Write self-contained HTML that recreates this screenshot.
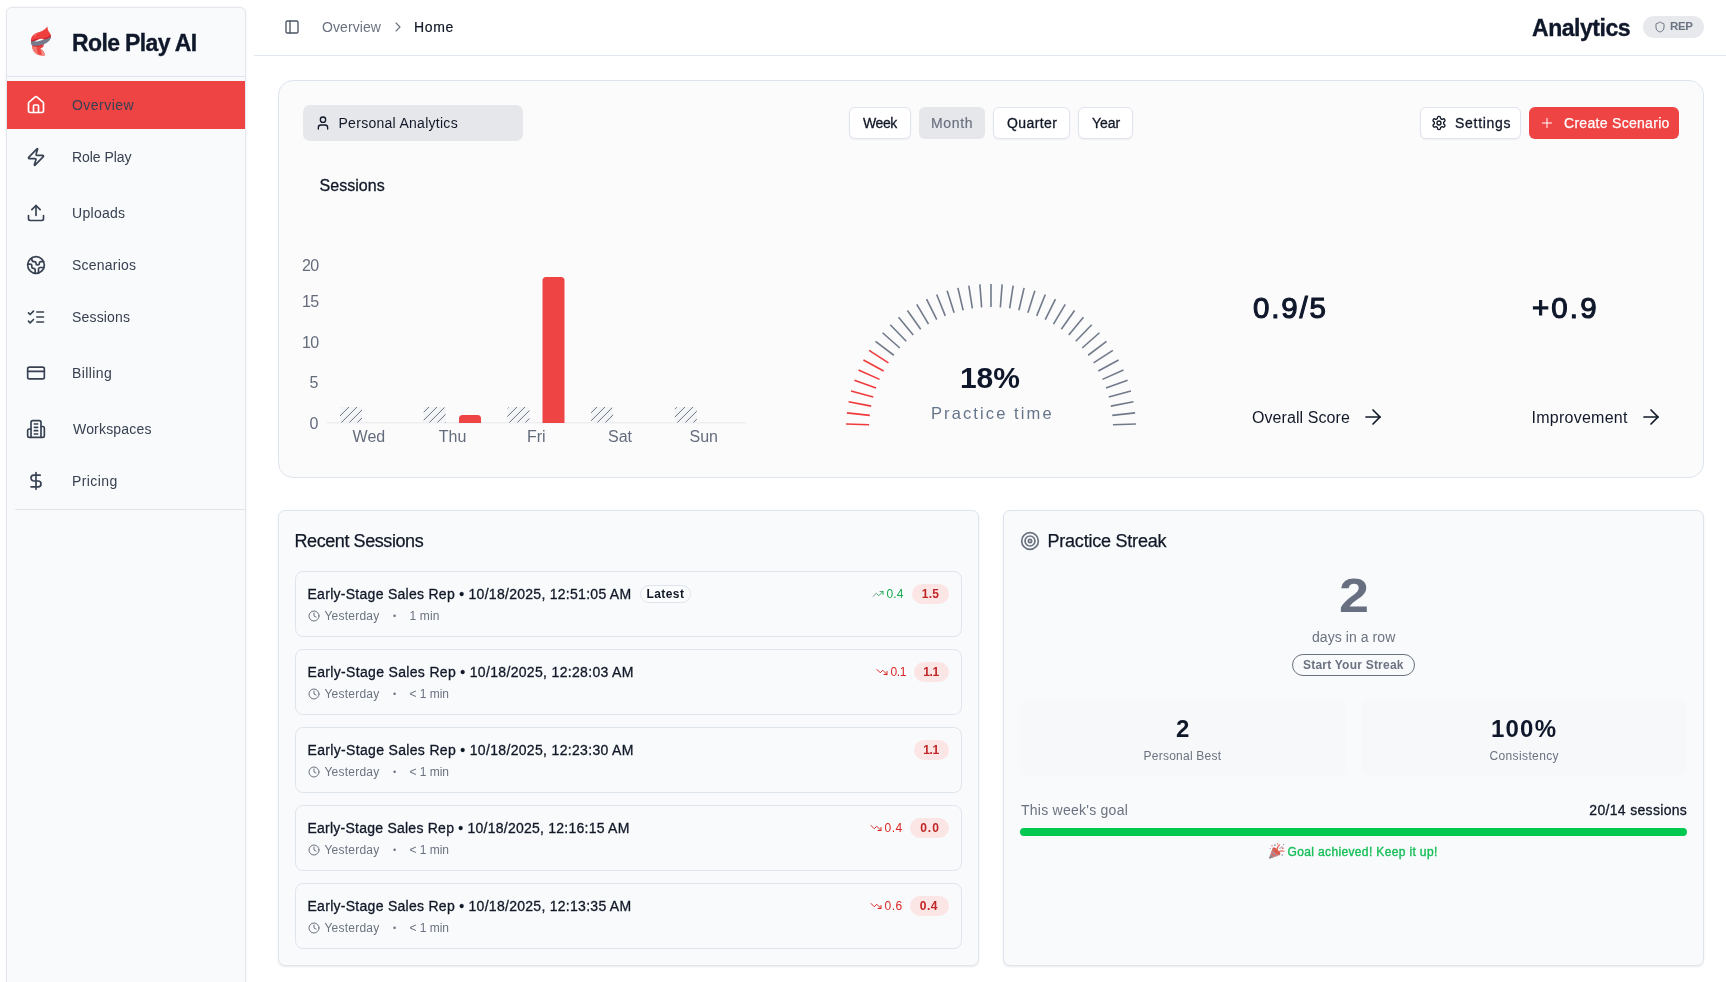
<!DOCTYPE html>
<html lang="en">
<head>
<meta charset="utf-8">
<title>Role Play AI - Analytics</title>
<style>
*{box-sizing:border-box;margin:0;padding:0}
html,body{width:1726px;height:982px;overflow:hidden;background:#fff}
body{font-family:"Liberation Sans",sans-serif;color:#0f172a;position:relative;-webkit-font-smoothing:antialiased;will-change:transform}
.abs{position:absolute}
.t{position:absolute;white-space:nowrap;line-height:1}
svg{display:block;overflow:visible}
.ico{position:absolute;fill:none;stroke:currentColor;stroke-width:2;stroke-linecap:round;stroke-linejoin:round}

/* sidebar */
#sidebar{position:absolute;left:6px;top:7px;width:240px;height:990px;background:#f9fafb;border:1px solid #e3e6ec;border-radius:6px 6px 0 0;box-shadow:0 0 3px rgba(15,23,42,.06)}
#sb-div1{position:absolute;left:7px;top:76px;width:238px;height:1px;background:#dfe5ee}
#sb-active{position:absolute;left:7px;top:81px;width:238px;height:48px;background:#ef4444}
#sb-div2{position:absolute;left:15px;top:509px;width:230px;height:1px;background:#e2e6ec}
.nav{position:absolute;left:73px;font-size:14px;color:#374151;line-height:20px;white-space:nowrap;letter-spacing:.2px}
.nico{left:26px;width:20px;height:20px;color:#374151}

/* header */
#hdr-line{position:absolute;left:254px;top:55px;width:1472px;height:1px;background:#e2e8f0}

/* cards */
#card-top{position:absolute;left:278px;top:80px;width:1426px;height:398px;background:#fbfbfc;border:1px solid #dde4ee;border-radius:15px}
.card{position:absolute;top:510px;width:701px;height:456px;background:#f8fafc;border:1px solid #dfe5ed;border-radius:7px;box-shadow:0 1px 2px rgba(15,23,42,.09)}
.sess{position:absolute;left:295px;width:667px;height:66px;border:1px solid #e0e6ee;border-radius:8px;background:#f8fafc}
.btn{position:absolute;top:107px;height:32px;border:1px solid #dfe5ee;border-radius:6px;background:#fff;box-shadow:0 1px 2px rgba(15,23,42,.05)}
.st{font-size:14px;color:#111827;-webkit-text-stroke:.3px #111827;letter-spacing:.28px}
.sub{font-size:12px;color:#6b7280;letter-spacing:.2px}
</style>
</head>
<body>

<!-- ============ SIDEBAR ============ -->
<aside>
<div id="sidebar"></div>
<div id="sb-div1"></div>
<div id="sb-active"></div>
<div id="sb-div2"></div>
<!-- logo -->
<svg class="abs" style="left:29px;top:25px" width="24" height="32" viewBox="29 25 24 32">
  <path d="M32.400 45c-.4 2.300.1 4.600 1.500 6.600 1.600 2.300 4.200 3.700 7 4 1.400.1 2.700 0 4-.1-.1-2-.9-3.800-2.300-5.300-.7-.8-1.500-1.400-2.400-1.800 1.700-.5 3.100-1.500 3.900-3z" fill="#ef4642"/>
  <path d="M32.400 45c-.4 2.300.1 4.600 1.500 6.600 1.300 1.900 3.300 3.200 5.500 3.700-2.300-2.600-3.200-6-2.500-9.300z" fill="#f27a72"/>
  <path d="M39.800 48.400c1 .4 1.800 1 2.500 1.800 1.400 1.500 2.200 3.300 2.300 5.300-1 .1-2 .2-3.100.1.400-2.600-.2-5.200-1.700-7.200z" fill="#f38d85"/>
  <path d="M47.300 26.500c.4 1.500.3 2.800.9 4.100.6 1.400 2 2.500 2.500 4.200.4 1.200.4 2.400.1 3.500l-19.600 3.900c-.5-1.900-.3-3.800.7-5.500 1.500-2.600 4.500-3.800 7.500-4.700 2.900-.9 6-2.300 7.900-5.500z" fill="#ee3e3e"/>
  <path d="M33.200 35.400c1.400-1.700 3.700-2.600 6.100-3.400-1.900 1.300-3.400 3-4 5.300-.9-.5-1.600-1.100-2.100-1.900z" fill="#f26a64" opacity=".8"/>
  <path d="M31.100 41.300c-.3 1.500 0 3 .8 4.300 3.500.6 7.400.3 11-.9 3.500-1.200 6.300-3.200 7.600-5.900.4-.9.500-1.900.4-2.900-.9 1.500-2.800 2.500-5.200 3.100-2.300.6-5 .8-7.600 1.100-2.600.3-5 .6-7 1.200z" fill="#747a8c"/>
  <path d="M31.200 41.800c2-.9 4.600-1.200 7.200-1.500 2.600-.3 5.200-.6 7.400-1.200 2.300-.6 4.100-1.600 5-3 .1-.5.100-.9 0-1.400-1.700 2-4.200 2.800-7 3.400-4.100.8-8.800.7-12.400 2.400-.1.400-.2.800-.2 1.300z" fill="#c9202c"/>
  <path d="M34.700 41.500c1.800-1.500 4.100-2.400 6.500-2.700 1-.1 2-.1 2.900.1-1.500 1-3.200 1.600-5 2-1.500.3-3 .5-4.400.6z" fill="#f6f7f9"/>
  <path d="M32.100 45.500c3.500.6 7.400.3 11-.9.400-.1.700-.3 1.100-.4-.2.500-.5 1-.8 1.400-3.700 1.200-7.700 1.400-11 .6-.1-.2-.2-.5-.3-.7z" fill="#c9202c" opacity=".85"/>
</svg>
<div class="t" id="brand" style="-webkit-text-stroke:.35px #0f172a;left:72px;top:32px;letter-spacing:-0.64px;font-size:23px;font-weight:700;color:#0f172a">Role Play AI</div>

<nav>
<svg class="ico nico" style="top:95px;color:#fff" viewBox="0 0 24 24"><path d="M15 21v-8a1 1 0 0 0-1-1h-4a1 1 0 0 0-1 1v8"/><path d="M3 10a2 2 0 0 1 .709-1.528l7-5.999a2 2 0 0 1 2.582 0l7 5.999A2 2 0 0 1 21 10v9a2 2 0 0 1-2 2H5a2 2 0 0 1-2-2z"/></svg>
<div id="x1" class="nav" style="left:72px;top:95px;letter-spacing:0.46px;color:#364152">Overview</div>

<svg class="ico nico" style="top:147px" viewBox="0 0 24 24"><path d="M4 14a1 1 0 0 1-.78-1.630l9.900-10.200a.5.5 0 0 1 .86.460l-1.920 6.020A1 1 0 0 0 13 10h7a1 1 0 0 1 .78 1.630l-9.900 10.200a.5.5 0 0 1-.86-.460l1.920-6.020A1 1 0 0 0 11 14z"/></svg>
<div id="x2" class="nav" style="left:72px;top:147px;letter-spacing:-0.05px;">Role Play</div>

<svg class="ico nico" style="top:203px" viewBox="0 0 24 24"><path d="M21 15v4a2 2 0 0 1-2 2H5a2 2 0 0 1-2-2v-4"/><polyline points="17 8 12 3 7 8"/><line x1="12" x2="12" y1="3" y2="15"/></svg>
<div id="x3" class="nav" style="left:72px;top:203px;letter-spacing:0.29px;">Uploads</div>

<svg class="ico nico" style="top:255px" viewBox="0 0 24 24"><path d="M21.540 15H17a2 2 0 0 0-2 2v4.540"/><path d="M7 3.340V5a3 3 0 0 0 3 3a2 2 0 0 1 2 2c0 1.100.9 2 2 2a2 2 0 0 0 2-2c0-1.100.9-2 2-2h3.170"/><path d="M11 21.950V18a2 2 0 0 0-2-2a2 2 0 0 1-2-2v-1a2 2 0 0 0-2-2H2.050"/><circle cx="12" cy="12" r="10"/></svg>
<div id="x4" class="nav" style="left:72px;top:255px;letter-spacing:0.22px;">Scenarios</div>

<svg class="ico nico" style="top:307px" viewBox="0 0 24 24"><path d="m3 17 2 2 4-4"/><path d="m3 7 2 2 4-4"/><path d="M13 6h8"/><path d="M13 12h8"/><path d="M13 18h8"/></svg>
<div id="x5" class="nav" style="left:72px;top:307px;letter-spacing:0.17px;">Sessions</div>

<svg class="ico nico" style="top:363px" viewBox="0 0 24 24"><rect width="20" height="14" x="2" y="5" rx="2"/><line x1="2" x2="22" y1="10" y2="10"/></svg>
<div id="x6" class="nav" style="left:72px;top:363px;letter-spacing:0.41px;">Billing</div>

<svg class="ico nico" style="top:419px" viewBox="0 0 24 24"><path d="M6 22V4a2 2 0 0 1 2-2h8a2 2 0 0 1 2 2v18Z"/><path d="M6 12H4a2 2 0 0 0-2 2v6a2 2 0 0 0 2 2h2"/><path d="M18 9h2a2 2 0 0 1 2 2v9a2 2 0 0 1-2 2h-2"/><path d="M10 6h4"/><path d="M10 10h4"/><path d="M10 14h4"/><path d="M10 18h4"/></svg>
<div id="x7" class="nav" style="left:73px;top:419px;letter-spacing:0.18px;">Workspaces</div>

<svg class="ico nico" style="top:471px" viewBox="0 0 24 24"><line x1="12" x2="12" y1="2" y2="22"/><path d="M17 5H9.500a3.500 3.500 0 0 0 0 7h5a3.500 3.500 0 0 1 0 7H6"/></svg>
<div id="x8" class="nav" style="left:72px;top:471px;letter-spacing:0.41px;">Pricing</div>

</nav>
</aside>
<!-- ============ HEADER ============ -->
<header>
<div id="hdr-line"></div>
<svg class="ico" style="left:284px;top:19px;width:16px;height:16px;color:#4b5563" viewBox="0 0 24 24"><rect width="18" height="18" x="3" y="3" rx="2"/><path d="M9 3v18"/></svg>
<div class="t" id="bc1" style="left:322px;top:20.2px;letter-spacing:0.09px;font-size:14px;color:#6b7280">Overview</div>
<svg class="ico" style="left:389.800px;top:19px;width:16px;height:16px;color:#6b7280;stroke-width:1.700" viewBox="0 0 24 24"><path d="m9 18 6-6-6-6"/></svg>
<div class="t" id="bc2" style="left:414px;top:20.2px;letter-spacing:0.62px;font-size:14px;color:#111827;-webkit-text-stroke:.2px #111827">Home</div>
<div class="t" id="h-title" style="-webkit-text-stroke:.35px #0f172a;left:1532px;top:17px;letter-spacing:-0.47px;font-size:23px;font-weight:700;color:#0f172a">Analytics</div>
<div class="abs" style="left:1643px;top:16px;width:61px;height:22px;border-radius:11px;background:#e7e9ed"></div>
<svg class="ico" style="left:1653.800px;top:21.200px;width:12px;height:12px;color:#6b7280;stroke-width:2" viewBox="0 0 24 24"><path d="M20 13c0 5-3.500 7.500-7.660 8.950a1 1 0 0 1-.670-.010C7.500 20.500 4 18 4 13V6a1 1 0 0 1 1-1c2 0 4.500-1.200 6.240-2.720a1.170 1.170 0 0 1 1.520 0C14.510 3.810 17 5 19 5a1 1 0 0 1 1 1z"/></svg>
<div class="t" id="rep" style="left:1670px;top:21.2px;letter-spacing:-0.35px;font-size:11.500px;font-weight:700;color:#6b7280">REP</div>

</header>
<main>
<!-- ============ TOP CARD ============ -->
<section>
<div id="card-top"></div>
<!-- personal analytics -->
<div class="abs" style="left:303px;top:105px;width:220px;height:36px;border-radius:7px;background:#e6e7eb"></div>
<svg class="ico" style="left:315px;top:115px;width:16px;height:16px;color:#111827" viewBox="0 0 24 24"><path d="M19 21v-2a4 4 0 0 0-4-4H9a4 4 0 0 0-4 4v2"/><circle cx="12" cy="7" r="4"/></svg>
<div class="t" id="pa" style="left:338.5px;top:116px;letter-spacing:0.28px;font-size:14px;color:#111827">Personal Analytics</div>

<!-- period buttons -->
<div class="btn" style="left:849px;width:62px"></div>
<div class="t" id="b-week" style="left:863px;top:116px;letter-spacing:-0.42px;font-size:14px;color:#111827;-webkit-text-stroke:.3px #111827">Week</div>
<div class="abs" style="left:919px;top:107px;width:66px;height:32px;border-radius:6px;background:#e6e7eb"></div>
<div class="t" id="b-month" style="left:931px;top:116px;letter-spacing:0.68px;font-size:14px;color:#6b7280;-webkit-text-stroke:.2px #6b7280">Month</div>
<div class="btn" style="left:993px;width:77px"></div>
<div class="t" id="b-quarter" style="left:1007px;top:116px;letter-spacing:0.39px;font-size:14px;color:#111827;-webkit-text-stroke:.3px #111827">Quarter</div>
<div class="btn" style="left:1078px;width:55px"></div>
<div class="t" id="b-year" style="left:1092px;top:116px;letter-spacing:-0.06px;font-size:14px;color:#111827;-webkit-text-stroke:.3px #111827">Year</div>

<!-- settings / create -->
<div class="btn" style="left:1420px;width:101px"></div>
<svg class="ico" style="left:1431px;top:115px;width:16px;height:16px;color:#111827;stroke-width:2" viewBox="0 0 24 24"><path d="M12.220 2h-.440a2 2 0 0 0-2 2v.180a2 2 0 0 1-1 1.730l-.430.250a2 2 0 0 1-2 0l-.150-.080a2 2 0 0 0-2.730.730l-.220.380a2 2 0 0 0 .730 2.730l.150.100a2 2 0 0 1 1 1.720v.510a2 2 0 0 1-1 1.740l-.150.090a2 2 0 0 0-.730 2.730l.220.380a2 2 0 0 0 2.730.730l.150-.080a2 2 0 0 1 2 0l.430.250a2 2 0 0 1 1 1.730V20a2 2 0 0 0 2 2h.440a2 2 0 0 0 2-2v-.180a2 2 0 0 1 1-1.730l.430-.250a2 2 0 0 1 2 0l.150.080a2 2 0 0 0 2.730-.730l.220-.390a2 2 0 0 0-.730-2.730l-.150-.080a2 2 0 0 1-1-1.740v-.500a2 2 0 0 1 1-1.740l.150-.090a2 2 0 0 0 .730-2.730l-.220-.380a2 2 0 0 0-2.730-.730l-.150.080a2 2 0 0 1-2 0l-.430-.250a2 2 0 0 1-1-1.730V4a2 2 0 0 0-2-2z"/><circle cx="12" cy="12" r="3"/></svg>
<div class="t" id="b-settings" style="left:1455px;top:116px;letter-spacing:0.71px;font-size:14px;color:#111827;-webkit-text-stroke:.3px #111827">Settings</div>
<div class="abs" style="left:1529px;top:107px;width:150px;height:32px;border-radius:6px;background:#ef4444"></div>
<svg class="ico" style="left:1539px;top:115px;width:16px;height:16px;color:#fff;stroke-width:1.500" viewBox="0 0 24 24"><path d="M5 12h14"/><path d="M12 5v14"/></svg>
<div class="t" id="b-create" style="left:1564px;top:116px;letter-spacing:0.3px;font-size:14px;color:#fff;-webkit-text-stroke:.25px #fff">Create Scenario</div>

<!-- sessions chart -->
<div class="t" id="c-title" style="left:319.5px;top:177.6px;letter-spacing:0.03px;font-size:16px;color:#111827;-webkit-text-stroke:.3px #111827">Sessions</div>
<svg class="abs" id="chart" style="left:290px;top:250px" width="470" height="200" viewBox="290 250 470 200">
  <defs>
    <clipPath id="yclip"><rect x="302" y="250" width="30" height="200"/></clipPath>
  </defs>
  <rect x="327" y="422.300" width="419" height="1" fill="#e6e8ec"/>
  <clipPath id="hclip">
    <path d="M340 422.800v-13.400a2.500 2.500 0 0 1 2.500-2.500h17a2.500 2.500 0 0 1 2.500 2.500v13.400z"/>
    <path d="M423.700 422.800v-13.400a2.500 2.500 0 0 1 2.500-2.500h17a2.500 2.500 0 0 1 2.500 2.500v13.400z"/>
    <path d="M507.400 422.800v-13.400a2.500 2.500 0 0 1 2.500-2.500h17a2.500 2.500 0 0 1 2.500 2.500v13.400z"/>
    <path d="M591.100 422.800v-13.400a2.500 2.500 0 0 1 2.500-2.500h17a2.500 2.500 0 0 1 2.500 2.500v13.400z"/>
    <path d="M674.800 422.800v-13.400a2.500 2.500 0 0 1 2.500-2.500h17a2.500 2.500 0 0 1 2.500 2.500v13.400z"/>
  </clipPath>
  <g fill="#f4f5f7">
    <path d="M340 422.800v-13.400a2.500 2.500 0 0 1 2.500-2.500h17a2.500 2.500 0 0 1 2.500 2.500v13.400z"/>
    <path d="M423.700 422.800v-13.400a2.500 2.500 0 0 1 2.500-2.500h17a2.500 2.500 0 0 1 2.500 2.500v13.400z"/>
    <path d="M507.400 422.800v-13.400a2.500 2.500 0 0 1 2.500-2.500h17a2.500 2.500 0 0 1 2.500 2.500v13.400z"/>
    <path d="M591.100 422.800v-13.400a2.500 2.500 0 0 1 2.500-2.500h17a2.500 2.500 0 0 1 2.500 2.500v13.400z"/>
    <path d="M674.800 422.800v-13.400a2.500 2.500 0 0 1 2.500-2.500h17a2.500 2.500 0 0 1 2.500 2.500v13.400z"/>
  </g>
  <g clip-path="url(#hclip)" stroke="#687080" stroke-width="1" fill="none">
    <path d="M325.1 422.800l17-17"/><path d="M333.1 422.800l17-17"/><path d="M341.1 422.800l17-17"/><path d="M349.1 422.800l17-17"/><path d="M357.1 422.800l17-17"/><path d="M413.1 422.800l17-17"/><path d="M421.1 422.800l17-17"/><path d="M429.1 422.800l17-17"/><path d="M437.1 422.800l17-17"/><path d="M445.1 422.800l17-17"/><path d="M493.1 422.800l17-17"/><path d="M501.1 422.800l17-17"/><path d="M509.1 422.800l17-17"/><path d="M517.1 422.800l17-17"/><path d="M525.1 422.800l17-17"/><path d="M581.1 422.800l17-17"/><path d="M589.1 422.800l17-17"/><path d="M597.1 422.800l17-17"/><path d="M605.1 422.800l17-17"/><path d="M613.1 422.800l17-17"/><path d="M661.1 422.800l17-17"/><path d="M669.1 422.800l17-17"/><path d="M677.1 422.800l17-17"/><path d="M685.1 422.800l17-17"/><path d="M693.1 422.800l17-17"/>
  </g>
  <path d="M459 423v-4.500a3.500 3.500 0 0 1 3.500-3.500h15a3.500 3.500 0 0 1 3.500 3.500v4.500z" fill="#ef4444"/>
  <path d="M542.500 423v-142.500a3.500 3.500 0 0 1 3.500-3.500h15a3.500 3.500 0 0 1 3.500 3.500v142.500z" fill="#ef4444"/>
  <g font-family="Liberation Sans, sans-serif" font-size="16" fill="#646c7c" text-anchor="end" clip-path="url(#yclip)">
    <text x="318.500" y="271" letter-spacing="-.6">20</text>
    <text x="318.500" y="306.700" letter-spacing="-.6">15</text>
    <text x="318.500" y="347.700" letter-spacing="-.6">10</text>
    <text x="318.500" y="388.200">5</text>
    <text x="318.500" y="428.700">0</text>
  </g>
  <g font-family="Liberation Sans, sans-serif" font-size="16" fill="#646c7c" text-anchor="middle">
    <text x="368.900" y="441.700">Wed</text>
    <text x="452.600" y="441.700">Thu</text>
    <text x="536.300" y="441.700">Fri</text>
    <text x="620" y="441.700">Sat</text>
    <text x="703.700" y="441.700">Sun</text>
  </g>
</svg>

<!-- gauge -->
<svg class="abs" id="gauge" style="left:830px;top:270px" width="330" height="170" viewBox="830 270 330 170">
  <line x1="846.09" y1="423.94" x2="869.07" y2="424.74" stroke="#ef3b3b" stroke-width="1.600"/>
  <line x1="846.90" y1="412.84" x2="869.76" y2="415.40" stroke="#ef3b3b" stroke-width="1.600"/>
  <line x1="848.57" y1="401.83" x2="871.16" y2="406.14" stroke="#ef3b3b" stroke-width="1.600"/>
  <line x1="851.07" y1="390.98" x2="873.27" y2="397.01" stroke="#ef3b3b" stroke-width="1.600"/>
  <line x1="854.40" y1="380.36" x2="876.07" y2="388.07" stroke="#ef3b3b" stroke-width="1.600"/>
  <line x1="858.54" y1="370.02" x2="879.55" y2="379.38" stroke="#ef3b3b" stroke-width="1.600"/>
  <line x1="863.45" y1="360.03" x2="883.68" y2="370.97" stroke="#ef3b3b" stroke-width="1.600"/>
  <line x1="869.12" y1="350.45" x2="888.45" y2="362.91" stroke="#ef3b3b" stroke-width="1.600"/>
  <line x1="875.50" y1="341.33" x2="893.82" y2="355.24" stroke="#717a89" stroke-width="1.600"/>
  <line x1="882.57" y1="332.73" x2="899.77" y2="348.00" stroke="#717a89" stroke-width="1.600"/>
  <line x1="890.27" y1="324.70" x2="906.25" y2="341.24" stroke="#717a89" stroke-width="1.600"/>
  <line x1="898.57" y1="317.28" x2="913.23" y2="335.00" stroke="#717a89" stroke-width="1.600"/>
  <line x1="907.42" y1="310.51" x2="920.68" y2="329.31" stroke="#717a89" stroke-width="1.600"/>
  <line x1="916.75" y1="304.45" x2="928.53" y2="324.21" stroke="#717a89" stroke-width="1.600"/>
  <line x1="926.53" y1="299.12" x2="936.75" y2="319.72" stroke="#717a89" stroke-width="1.600"/>
  <line x1="936.68" y1="294.56" x2="945.30" y2="315.88" stroke="#717a89" stroke-width="1.600"/>
  <line x1="947.16" y1="290.79" x2="954.11" y2="312.71" stroke="#717a89" stroke-width="1.600"/>
  <line x1="957.89" y1="287.83" x2="963.14" y2="310.22" stroke="#717a89" stroke-width="1.600"/>
  <line x1="968.82" y1="285.71" x2="972.34" y2="308.44" stroke="#717a89" stroke-width="1.600"/>
  <line x1="979.88" y1="284.43" x2="981.64" y2="307.36" stroke="#717a89" stroke-width="1.600"/>
  <line x1="991.00" y1="284.00" x2="991.00" y2="307.00" stroke="#717a89" stroke-width="1.600"/>
  <line x1="1002.12" y1="284.43" x2="1000.36" y2="307.36" stroke="#717a89" stroke-width="1.600"/>
  <line x1="1013.18" y1="285.71" x2="1009.66" y2="308.44" stroke="#717a89" stroke-width="1.600"/>
  <line x1="1024.11" y1="287.83" x2="1018.86" y2="310.22" stroke="#717a89" stroke-width="1.600"/>
  <line x1="1034.84" y1="290.79" x2="1027.89" y2="312.71" stroke="#717a89" stroke-width="1.600"/>
  <line x1="1045.32" y1="294.56" x2="1036.70" y2="315.88" stroke="#717a89" stroke-width="1.600"/>
  <line x1="1055.47" y1="299.12" x2="1045.25" y2="319.72" stroke="#717a89" stroke-width="1.600"/>
  <line x1="1065.25" y1="304.45" x2="1053.47" y2="324.21" stroke="#717a89" stroke-width="1.600"/>
  <line x1="1074.58" y1="310.51" x2="1061.32" y2="329.31" stroke="#717a89" stroke-width="1.600"/>
  <line x1="1083.43" y1="317.28" x2="1068.77" y2="335.00" stroke="#717a89" stroke-width="1.600"/>
  <line x1="1091.73" y1="324.70" x2="1075.75" y2="341.24" stroke="#717a89" stroke-width="1.600"/>
  <line x1="1099.43" y1="332.73" x2="1082.23" y2="348.00" stroke="#717a89" stroke-width="1.600"/>
  <line x1="1106.50" y1="341.33" x2="1088.18" y2="355.24" stroke="#717a89" stroke-width="1.600"/>
  <line x1="1112.88" y1="350.45" x2="1093.55" y2="362.91" stroke="#717a89" stroke-width="1.600"/>
  <line x1="1118.55" y1="360.03" x2="1098.32" y2="370.97" stroke="#717a89" stroke-width="1.600"/>
  <line x1="1123.46" y1="370.02" x2="1102.45" y2="379.38" stroke="#717a89" stroke-width="1.600"/>
  <line x1="1127.60" y1="380.36" x2="1105.93" y2="388.07" stroke="#717a89" stroke-width="1.600"/>
  <line x1="1130.93" y1="390.98" x2="1108.73" y2="397.01" stroke="#717a89" stroke-width="1.600"/>
  <line x1="1133.43" y1="401.83" x2="1110.84" y2="406.14" stroke="#717a89" stroke-width="1.600"/>
  <line x1="1135.10" y1="412.84" x2="1112.24" y2="415.40" stroke="#717a89" stroke-width="1.600"/>
  <line x1="1135.91" y1="423.94" x2="1112.93" y2="424.74" stroke="#717a89" stroke-width="1.600"/>
</svg>

<div class="t" id="g-pct" style="left:960px;top:363px;letter-spacing:-0.09px;font-size:30px;font-weight:700;color:#0f172a">18%</div>
<div class="t" id="g-lbl" style="left:931px;top:404.6px;letter-spacing:2.1px;font-size:16.500px;color:#64748b">Practice time</div>
<!-- stats -->
<div class="t" id="s1" style="left:1253px;top:293px;letter-spacing:1.82px;font-size:29.500px;font-weight:400;-webkit-text-stroke:1.1px #0f172a;color:#0f172a">0.9/5</div>
<div class="t" id="s2" style="left:1532px;top:293px;letter-spacing:2.1px;font-size:29.500px;font-weight:400;-webkit-text-stroke:1.1px #0f172a;color:#0f172a">+0.9</div>
<div class="t" id="s1l" style="left:1252px;top:410px;letter-spacing:0.08px;font-size:16px;color:#111827">Overall Score</div>
<svg class="ico" style="left:1361.100px;top:405.200px;width:24px;height:24px;color:#111827;stroke-width:1.700" viewBox="0 0 24 24"><path d="M5 12h14"/><path d="m12 5 7 7-7 7"/></svg>
<div class="t" id="s2l" style="left:1531.5px;top:410px;letter-spacing:0.25px;font-size:16px;color:#111827">Improvement</div>
<svg class="ico" style="left:1639.100px;top:405.200px;width:24px;height:24px;color:#111827;stroke-width:1.700" viewBox="0 0 24 24"><path d="M5 12h14"/><path d="m12 5 7 7-7 7"/></svg>

</section>
<!-- ============ BOTTOM CARDS ============ -->
<section>
<div class="card" style="left:278px"></div>
<div class="t" id="rs-title" style="left:294.5px;top:532px;letter-spacing:-0.42px;font-size:18px;color:#111827;-webkit-text-stroke:.25px #111827">Recent Sessions</div>
<svg width="0" height="0" style="position:absolute"><defs><linearGradient id="upg" x1="0" y1="0" x2="1" y2="0"><stop offset="0" stop-color="#8b929e"/><stop offset=".45" stop-color="#4fae74"/><stop offset="1" stop-color="#18ab50"/></linearGradient></defs></svg>
<div class="sess" style="top:571px"></div>
<div class="t st" id="st0" style="left:307.5px;top:587px;letter-spacing:0.28px;">Early-Stage Sales Rep • 10/18/2025, 12:51:05 AM</div>
<div class="abs" style="left:640px;top:585px;width:51px;height:18px;border:1px solid #dfe4ec;border-radius:9px;background:#fbfcfd"></div>
<div class="t" id="latest" style="left:646.5px;top:588.2px;letter-spacing:0.42px;font-size:12px;font-weight:700;color:#111827">Latest</div>
<svg class="ico" style="left:307.800px;top:609.9px;width:12px;height:12px;color:#6b7280;stroke-width:2" viewBox="0 0 24 24"><circle cx="12" cy="12" r="10"/><polyline points="12 6 12 12 16 14"/></svg>
<div class="t sub" id="sy0" style="left:324.5px;top:610px;letter-spacing:0.22px;">Yesterday</div>
<div class="t sub" id="sd0" style="left:393px;top:612.4px;letter-spacing:0.2px;font-size:9px">•</div>
<div class="t sub" id="sm0" style="left:409.5px;top:610px;letter-spacing:0.15px;">1 min</div>
<svg class="ico" style="left:872.2px;top:588px;width:12px;height:12px;stroke:url(#upg);stroke-width:2" viewBox="0 0 24 24"><polyline points="22 7 13.500 15.500 8.500 10.500 2 17"/><polyline points="16 7 22 7 22 13"/></svg>
<div class="t" id="tr0" style="left:886.6px;top:588.4px;letter-spacing:0.02px;font-size:12px;color:#18ab50">0.4</div>
<div class="abs" style="left:912px;top:584px;width:37.0px;height:20px;border-radius:10px;background:#fce5e5"></div>
<div class="t" id="sc0" style="left:921.8px;top:588.4px;letter-spacing:0.27px;font-size:12px;font-weight:700;color:#c02626">1.5</div>
<div class="sess" style="top:649px"></div>
<div class="t st" id="st1" style="left:307.5px;top:665px;letter-spacing:0.33px;">Early-Stage Sales Rep • 10/18/2025, 12:28:03 AM</div>
<svg class="ico" style="left:307.800px;top:687.9px;width:12px;height:12px;color:#6b7280;stroke-width:2" viewBox="0 0 24 24"><circle cx="12" cy="12" r="10"/><polyline points="12 6 12 12 16 14"/></svg>
<div class="t sub" id="sy1" style="left:324.5px;top:688px;letter-spacing:0.22px;">Yesterday</div>
<div class="t sub" id="sd1" style="left:393px;top:690.4px;letter-spacing:0.2px;font-size:9px">•</div>
<div class="t sub" id="sm1" style="left:409.5px;top:688px;letter-spacing:-0.04px;">&lt; 1 min</div>
<svg class="ico" style="left:876.2px;top:666px;width:12px;height:12px;stroke:#dc2626;stroke-width:2" viewBox="0 0 24 24"><polyline points="22 17 13.500 8.500 8.500 13.500 2 7"/><polyline points="16 17 22 17 22 11"/></svg>
<div class="t" id="tr1" style="left:890.6px;top:666.4px;letter-spacing:-0.43px;font-size:12px;color:#dc2626">0.1</div>
<div class="abs" style="left:914px;top:662px;width:35.0px;height:20px;border-radius:10px;background:#fce5e5"></div>
<div class="t" id="sc1" style="left:923.3px;top:666.4px;letter-spacing:-0.35px;font-size:12px;font-weight:700;color:#c02626">1.1</div>
<div class="sess" style="top:727px"></div>
<div class="t st" id="st2" style="left:307.5px;top:743px;letter-spacing:0.33px;">Early-Stage Sales Rep • 10/18/2025, 12:23:30 AM</div>
<svg class="ico" style="left:307.800px;top:765.9px;width:12px;height:12px;color:#6b7280;stroke-width:2" viewBox="0 0 24 24"><circle cx="12" cy="12" r="10"/><polyline points="12 6 12 12 16 14"/></svg>
<div class="t sub" id="sy2" style="left:324.5px;top:766px;letter-spacing:0.22px;">Yesterday</div>
<div class="t sub" id="sd2" style="left:393px;top:768.4px;letter-spacing:0.2px;font-size:9px">•</div>
<div class="t sub" id="sm2" style="left:409.5px;top:766px;letter-spacing:-0.04px;">&lt; 1 min</div>
<div class="abs" style="left:914px;top:740px;width:35.0px;height:20px;border-radius:10px;background:#fce5e5"></div>
<div class="t" id="sc2" style="left:923.3px;top:744.4px;letter-spacing:-0.35px;font-size:12px;font-weight:700;color:#c02626">1.1</div>
<div class="sess" style="top:805px"></div>
<div class="t st" id="st3" style="left:307.5px;top:821px;letter-spacing:0.24px;">Early-Stage Sales Rep • 10/18/2025, 12:16:15 AM</div>
<svg class="ico" style="left:307.800px;top:843.9px;width:12px;height:12px;color:#6b7280;stroke-width:2" viewBox="0 0 24 24"><circle cx="12" cy="12" r="10"/><polyline points="12 6 12 12 16 14"/></svg>
<div class="t sub" id="sy3" style="left:324.5px;top:844px;letter-spacing:0.22px;">Yesterday</div>
<div class="t sub" id="sd3" style="left:393px;top:846.4px;letter-spacing:0.2px;font-size:9px">•</div>
<div class="t sub" id="sm3" style="left:409.5px;top:844px;letter-spacing:-0.04px;">&lt; 1 min</div>
<svg class="ico" style="left:870.100px;top:822px;width:12px;height:12px;stroke:#dc2626;stroke-width:2" viewBox="0 0 24 24"><polyline points="22 17 13.500 8.500 8.500 13.500 2 7"/><polyline points="16 17 22 17 22 11"/></svg>
<div class="t" id="tr3" style="left:884.6px;top:822.4px;letter-spacing:0.4px;font-size:12px;color:#dc2626">0.4</div>
<div class="abs" style="left:910.4px;top:818px;width:38.6px;height:20px;border-radius:10px;background:#fce5e5"></div>
<div class="t" id="sc3" style="left:920.2px;top:822.4px;letter-spacing:0.99px;font-size:12px;font-weight:700;color:#c02626">0.0</div>
<div class="sess" style="top:883px"></div>
<div class="t st" id="st4" style="left:307.5px;top:899px;letter-spacing:0.28px;">Early-Stage Sales Rep • 10/18/2025, 12:13:35 AM</div>
<svg class="ico" style="left:307.800px;top:921.9px;width:12px;height:12px;color:#6b7280;stroke-width:2" viewBox="0 0 24 24"><circle cx="12" cy="12" r="10"/><polyline points="12 6 12 12 16 14"/></svg>
<div class="t sub" id="sy4" style="left:324.5px;top:922px;letter-spacing:0.22px;">Yesterday</div>
<div class="t sub" id="sd4" style="left:393px;top:924.4px;letter-spacing:0.2px;font-size:9px">•</div>
<div class="t sub" id="sm4" style="left:409.5px;top:922px;letter-spacing:-0.04px;">&lt; 1 min</div>
<svg class="ico" style="left:870.100px;top:900px;width:12px;height:12px;stroke:#dc2626;stroke-width:2" viewBox="0 0 24 24"><polyline points="22 17 13.500 8.500 8.500 13.500 2 7"/><polyline points="16 17 22 17 22 11"/></svg>
<div class="t" id="tr4" style="left:884.6px;top:900.4px;letter-spacing:0.4px;font-size:12px;color:#dc2626">0.6</div>
<div class="abs" style="left:910.4px;top:896px;width:38.6px;height:20px;border-radius:10px;background:#fce5e5"></div>
<div class="t" id="sc4" style="left:919.7px;top:900.4px;letter-spacing:0.54px;font-size:12px;font-weight:700;color:#c02626">0.4</div>
</section>
<section>
<div class="card" style="left:1003px"></div>
<svg class="ico" style="left:1020px;top:531px;width:20px;height:20px;color:#6b7280;stroke-width:2" viewBox="0 0 24 24"><circle cx="12" cy="12" r="10"/><circle cx="12" cy="12" r="6"/><circle cx="12" cy="12" r="2"/></svg>
<div class="t" id="ps-title" style="left:1047.5px;top:532px;letter-spacing:-0.22px;font-size:18px;color:#111827;-webkit-text-stroke:.25px #111827">Practice Streak</div>
<div class="t" id="big2" style="transform:scaleX(1.1);transform-origin:0 0;left:1338.5px;top:571px;letter-spacing:0px;font-size:49px;font-weight:700;color:#686f80">2</div>
<div class="t" id="days" style="left:1312px;top:630.4px;letter-spacing:0.07px;font-size:14px;color:#6b7280">days in a row</div>
<div class="abs" style="left:1292px;top:654px;width:123px;height:22px;border:1px solid #6b7280;border-radius:11px"></div>
<div class="t" id="streakbtn" style="left:1303px;top:659px;letter-spacing:0.22px;font-size:12px;font-weight:700;color:#6b7280">Start Your Streak</div>
<div class="abs" style="left:1020px;top:699.500px;width:327px;height:76.500px;border-radius:8px;background:#f7f8fa"></div>
<div class="abs" style="left:1361px;top:699.500px;width:326px;height:76.500px;border-radius:8px;background:#f7f8fa"></div>
<div class="t" id="pb" style="left:1176px;top:716.6px;letter-spacing:0px;font-size:24px;font-weight:700;color:#0f172a">2</div>
<div class="t" id="pbl" style="left:1143.5px;top:750.4px;letter-spacing:0.24px;font-size:12px;color:#6b7280">Personal Best</div>
<div class="t" id="cons" style="left:1491px;top:716.8px;letter-spacing:1.2px;font-size:24px;font-weight:700;color:#0f172a">100%</div>
<div class="t" id="consl" style="left:1489.5px;top:750.4px;letter-spacing:0.37px;font-size:12px;color:#6b7280">Consistency</div>
<div class="t" id="goal" style="left:1021px;top:803.4px;letter-spacing:0.25px;font-size:14px;color:#6b7280">This week's goal</div>
<div class="t" id="goalv" style="left:1589.3px;top:803.4px;letter-spacing:0.32px;font-size:14px;color:#111827;-webkit-text-stroke:.3px #111827">20/14 sessions</div>
<div class="abs" style="left:1020px;top:828px;width:667px;height:8px;border-radius:4px;background:#00c851"></div>
<svg class="abs" style="left:1268px;top:843px" width="17" height="17" viewBox="0 0 17 17">
  <path d="M1 15.800 4.600 5.200c.3-.7 1.100-.9 1.700-.4l5.700 5.600c.5.500.3 1.400-.4 1.700z" fill="#e8685c"/>
  <path d="M2.500 11.400l3.100 3M3.600 8.200l5.300 5.200M4.800 5.200l6.900 6.800" stroke="#8f98ab" stroke-width="1.200" fill="none"/>
  <path d="M1 15.800l1.200-3.500 2.400 2.300z" fill="#7d8599"/>
  <ellipse cx="8.700" cy="8.100" rx="4.600" ry="1.700" transform="rotate(45 8.700 8.100)" fill="#d9574d"/>
  <path d="M9 7.400c0-2.400.8-4.200 2.600-5.600M10.600 8.900c1.700-1.100 3.500-1.400 5.300-.7" stroke="#e8685c" stroke-width="1.200" fill="none" stroke-linecap="round"/>
  <path d="M11.900 5.300c.9-.2 1.600-.8 1.900-1.700" stroke="#8f98ab" stroke-width="1" fill="none" stroke-linecap="round"/>
  <circle cx="7" cy="2.200" r=".9" fill="#8f98ab"/><circle cx="14.800" cy="5.200" r=".9" fill="#e8685c"/><circle cx="14.200" cy="12" r=".8" fill="#8f98ab"/><circle cx="9.600" cy="1" r=".7" fill="#e8685c"/><circle cx="4" cy="2.800" r=".7" fill="#e8685c"/><circle cx="15.600" cy="1.600" r=".7" fill="#8f98ab"/><circle cx="2.200" cy="5.600" r=".6" fill="#8f98ab"/>
</svg>
<div class="t" id="goalmsg" style="left:1287.5px;top:846px;letter-spacing:0.36px;-webkit-text-stroke:.35px #12be55;font-size:12px;color:#12be55">Goal achieved! Keep it up!</div>

</section>
</main>
</body>
</html>
